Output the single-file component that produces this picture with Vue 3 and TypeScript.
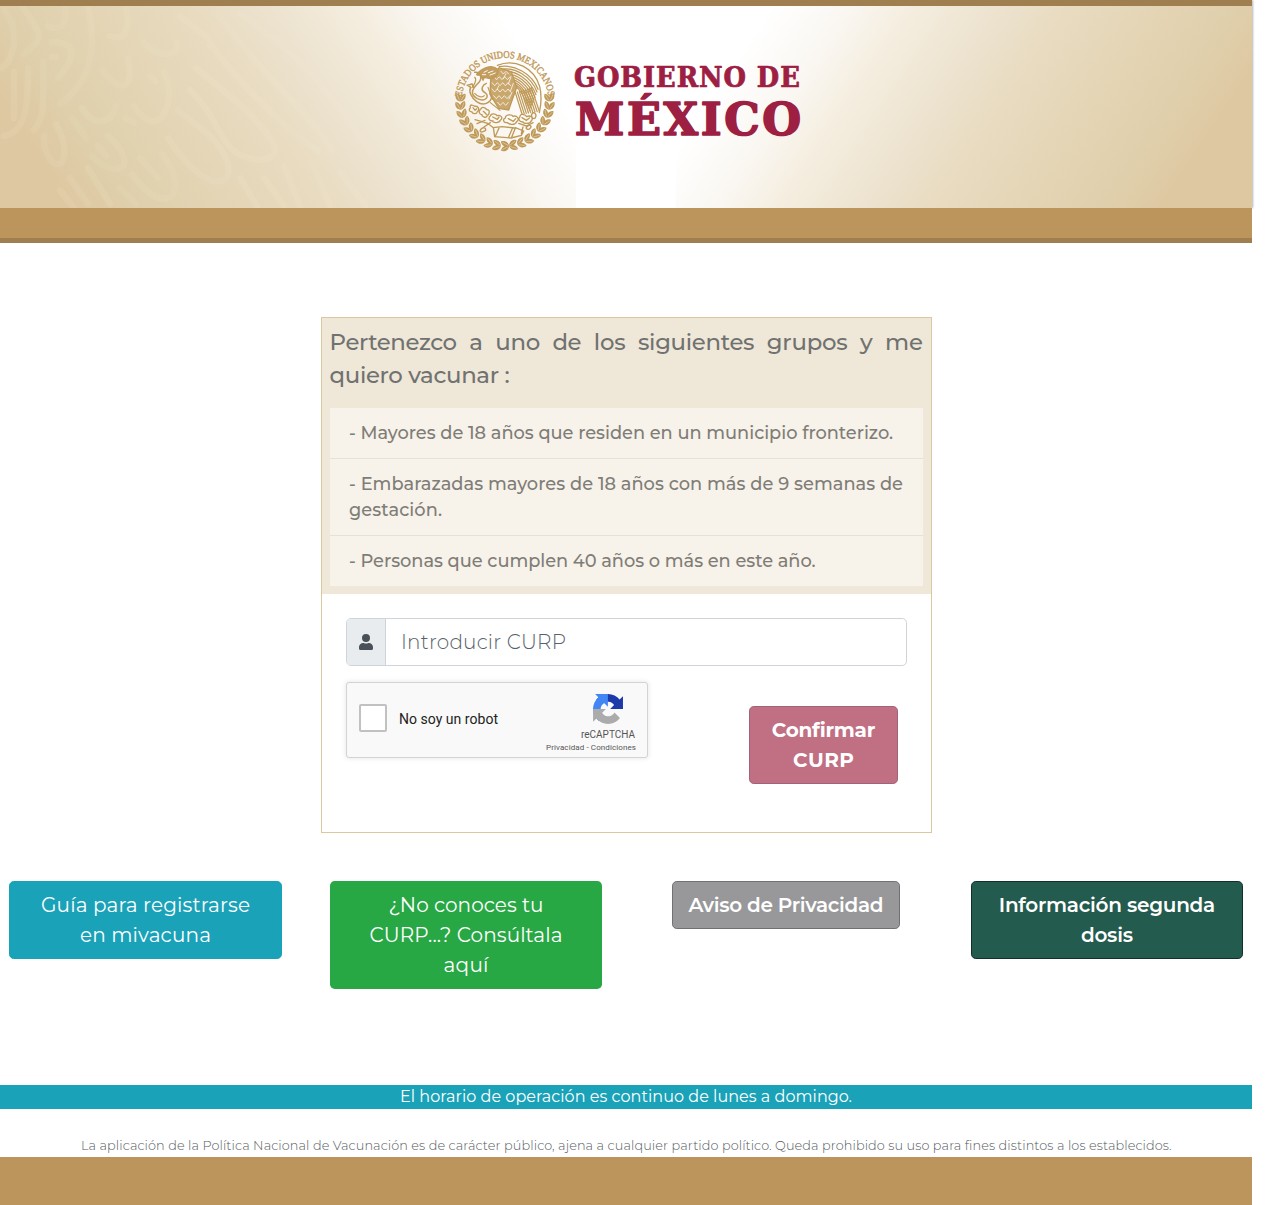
<script setup lang="ts">
import type { Directive } from 'vue'

interface Line { text: string; width: number }
interface LinkButton { kind: string; lines: Line[] }

// Spreads the letters of a line so that it fills the given width.
const vFit: Directive<HTMLElement, number> = {
  mounted(el, { value }) {
    const count = (el.textContent ?? '').length
    if (count < 2) return
    const gap = (value - el.getBoundingClientRect().width) / (count - 1)
    el.style.letterSpacing = `${gap}px`
    el.style.marginRight = `${-gap}px`
  },
}

const titleWords: Line[] = [
  { text: 'Pertenezco', width: 127.5 }, { text: 'a', width: 13 }, { text: 'uno', width: 45 },
  { text: 'de', width: 29 }, { text: 'los', width: 32 }, { text: 'siguientes', width: 116.5 },
  { text: 'grupos', width: 81 }, { text: 'y', width: 12 }, { text: 'me', width: 38 },
]

const groups: Line[][] = [
  [{ text: '- Mayores de 18 años que residen en un municipio fronterizo.', width: 544 }],
  [
    { text: '- Embarazadas mayores de 18 años con más de 9 semanas de', width: 554 },
    { text: 'gestación.', width: 93 },
  ],
  [{ text: '- Personas que cumplen 40 años o más en este año.', width: 466.5 }],
]

const links: LinkButton[] = [
  { kind: 'info', lines: [{ text: 'Guía para registrarse', width: 209 }, { text: 'en mivacuna', width: 131 }] },
  { kind: 'success', lines: [{ text: '¿No conoces tu', width: 155 }, { text: 'CURP...? Consúltala', width: 193 }, { text: 'aquí', width: 45 }] },
  { kind: 'privacy', lines: [{ text: 'Aviso de Privacidad', width: 195 }] },
  { kind: 'second', lines: [{ text: 'Información segunda', width: 216.5 }, { text: 'dosis', width: 52 }] },
]

// Laurel and oak leaves round the lower half of the seal.
const leaves = Array.from({ length: 38 }, (_, i) => {
  const angle = -5 + (i >> 1) * (190 / 18)
  const outer = i % 2 === 0
  const r = outer ? 141 : 127
  const rad = (angle * Math.PI) / 180
  return {
    x: 195 + r * Math.cos(rad),
    y: 184 + r * Math.sin(rad),
    turn: angle + (angle < 90 ? -90 : 90) + (outer ? 28 : -28) * (angle < 90 ? 1 : -1),
  }
})

const feathers = Array.from({ length: 9 }, (_, i) => i)
</script>

<template>
  <div class="page">
    <header class="banner">
      <div class="shade shade-left"></div>
      <div class="shade shade-right"></div>
      <svg class="waves" viewBox="0 0 420 202" width="420" height="202" fill="none">
        <g stroke="#f4efcf" stroke-opacity=".12" stroke-width="6.500" stroke-linecap="round">
          <path d="M5 5C22 30 12 54 2 62M22 0C46 34 42 32 24 48M52 36C80 36 74 54 58 72M52 51h4M65 0C70 24 54 24 48 20M88 0C98 50 88 78 60 98M14 66V112M28 62C28 100 26 126 4 130M43 56C43 94 46 110 34 124M44 130C42 150 60 170 64 150C66 136 60 126 56 118" />
          <path d="M82 102C90 118 110 122 116 100M72 112L86 132M98 140L106 150M108 130C142 160 116 176 92 150M102 64C122 90 134 82 128 52M126 0C130 24 126 36 110 30M144 36C156 52 182 52 176 36M150 70l6 6M134 100C160 140 178 92 164 66M126 112l8 5M140 152l18 20M132 168C166 216 192 186 162 148M120 182l16 16M70 172l18 26M88 162l22 36M60 184l14 18" />
        </g>
        <g stroke="#f6efd8" stroke-opacity=".13" stroke-width="6.500" stroke-linecap="round">
          <path d="M168 132C216 206 252 172 210 130L178 104M190 84C226 118 216 150 260 154C292 150 266 126 242 100L196 62M210 38C250 90 294 130 318 145M218 8C262 70 300 96 332 144M240 8C300 48 330 86 370 146M180 10l28 22M284 160l16 40M312 156l18 44M240 172l18 30M264 172l20 28M340 166l26 34" />
        </g>
      </svg>
      <div class="patch"></div>
      <svg class="seal" viewBox="0 0 390 360" width="130" height="120" fill="none" stroke="#bf9957" stroke-linecap="round">
        <path id="seal-arc" d="M64.500 177A130.700 130.700 0 0 1 325.500 177" stroke="none" />
        <text class="seal-text"><textPath href="#seal-arc" startOffset="6" textLength="382" lengthAdjust="spacingAndGlyphs">ESTADOS UNIDOS MEXICANOS</textPath></text>
        <g v-for="(leaf, i) in leaves" :key="i" :transform="`translate(${leaf.x} ${leaf.y}) rotate(${leaf.turn})`">
          <path d="M-14 0C-7-10 7-10 14 0C7 9-7 9-14 0Z" fill="#bf9957" stroke="none" />
          <path d="M-9 0H8" stroke="#f9f5ed" stroke-width="1.200" />
        </g>
        <!-- raised wing -->
        <path d="M172 76C225 54 282 84 299 139C306 168 303 196 298 218" stroke-width="4" />
        <g stroke-width="3.800">
          <path v-for="n in feathers" :key="n" :d="`M${178 + n * 6} ${80 + n * 7.5}C${222 + n * 2} ${72 + n * 9} ${276 - n * 3} ${100 + n * 8.500} ${294 - n * 3} ${148 + n * 8}`" />
          <path v-for="n in feathers" :key="'p' + n" :d="`M${226 + n * 6} ${158 - n * 2}L${246 + n * 6.5} ${222 - n}`" />
        </g>
        <!-- breast plumage -->
        <path d="M152 119L177 83L214 95L230 142L206 210L176 205L150 163Z" fill="#c9a76d" stroke-width="4" />
        <g stroke="#faf7f0" stroke-width="2.500">
          <path d="M162 110l8 9 8-9 8 9 8-9 8 9 8-9M156 128l8 9 8-9 8 9 8-9 8 9 8-9 8 9M156 147l8 9 8-9 8 9 8-9 8 9 8-9 8 9M161 167l8 9 8-9 8 9 8-9 8 9 8-9M173 187l8 9 8-9 8 9 8-9M183 94l7 8 8-8 8 8M213 110l-8 22M220 130l-9 24M216 157l-9 20M198 101l-8 15M176 138l-5 11" />
        </g>
        <!-- head and serpent -->
        <path d="M110 103C126 83 155 72 172 87C180 96 165 117 150 116L133 112L129 120L120 105C115 105 112 107 110 103Z" fill="#c39e60" stroke-width="4" />
        <path d="M132 97l10-5M145 98l14-5M150 105l16-6M127 104h10" stroke="#faf7f0" stroke-width="3" />
        <path d="M104 97C120 94 128 112 117 127C92 151 91 164 112 176C136 188 151 169 135 158C119 149 128 134 139 130M92 142C86 154 92 171 110 185C135 203 164 181 151 160M91 141L83 136L96 132L102 144" stroke-width="4.500" />
        <path d="M104 112C111 117 105 132 96 143M104 160C112 170 127 174 133 167M144 142L157 178M151 188L180 211" stroke-width="3.500" />
        <!-- cactus, rock and water -->
        <g stroke-width="4">
          <path d="M91 204C88 190 101 196 104 199C115 197 120 208 112 215C109 226 96 219 96 216C85 215 87 207 91 204ZM122 208C126 196 139 206 140 209C152 208 148 224 142 226C139 238 125 228 126 225C115 222 116 211 122 208ZM151 228C153 218 169 221 171 227C184 224 190 234 181 241C177 252 156 247 158 243C145 243 145 232 151 228ZM196 234C196 222 216 223 219 229C232 225 240 239 230 245C225 258 202 252 203 248C188 249 188 237 196 234ZM240 230C240 218 257 224 260 230C273 224 281 235 274 242C270 254 249 250 249 246C236 246 234 235 240 230ZM275 223C282 211 290 224 287 231C284 240 273 235 275 223Z" />
          <path d="M99 203l6 8 5-5M130 214l9 9M158 231l14 7 5-7M205 236l15 8 7-8M246 233l13 8 9-7M105 239L143 250L160 263M111 251L135 241M132 261L151 248M130 263C117 269 118 279 129 275C141 272 139 264 130 263ZM160 263L164 290L214 294L226 264L186 260ZM177 264L166 289M218 263L206 291M226 263L251 273L244 286L213 294M236 250L259 258L279 248M249 261L244 281M261 260C270 252 278 259 269 266C263 271 254 265 261 260Z" />
        </g>
      </svg>
      <svg class="wordmark" viewBox="0 0 240 90" width="240" height="90" fill="#9d2042" stroke="#9d2042" stroke-linejoin="round">
        <text transform="translate(4 31) scale(1.060 1)" font-size="27" textLength="213" lengthAdjust="spacing" stroke-width=".7">GOBIERNO DE</text>
        <text transform="translate(5 79) scale(1.100 1)" font-size="45" textLength="205.500" lengthAdjust="spacing" stroke-width="1.500">MÉXICO</text>
      </svg>
    </header>
    <div class="strip"></div>

    <main>
      <section class="card">
        <div class="card-head">
          <h1>
            <span class="title-row">
              <span v-for="w in titleWords" :key="w.text" v-fit="w.width" class="line">{{ w.text }}</span>
            </span>
            <span class="title-row"><span v-fit="180" class="line">quiero vacunar :</span></span>
          </h1>
          <ul>
            <li v-for="(g, i) in groups" :key="i">
              <div v-for="l in g" :key="l.text"><span v-fit="l.width" class="line">{{ l.text }}</span></div>
            </li>
          </ul>
        </div>
        <div class="card-body">
          <div class="input-group">
            <div class="addon">
              <svg viewBox="0 0 448 512" width="14" height="16" fill="#495057"><path d="M224 256a128 128 0 1 0 0-256 128 128 0 0 0 0 256zm89.600 32h-16.700a174 174 0 0 1-145.800 0h-16.700A134.400 134.400 0 0 0 0 422.400V464a48 48 0 0 0 48 48h352a48 48 0 0 0 48-48v-41.600A134.400 134.400 0 0 0 313.600 288z" /></svg>
            </div>
            <div class="field"><span v-fit="165" class="line">Introducir CURP</span></div>
          </div>
          <div class="actions">
            <div class="captcha">
              <span class="box"></span>
              <span class="robot"><span v-fit="99" class="line">No soy un robot</span></span>
              <div class="brand">
                <svg viewBox="0 0 64 64" width="30" height="30">
                  <path fill="#1c3aa9" d="M64 31.955a33.650 33.650 0 0 0-.048-1.381V4.688l-7.156 7.156C50.939 4.675 42.033.094 32.060.094c-10.378 0-19.600 4.960-25.437 12.643l11.730 11.854a15.550 15.550 0 0 1 4.754-5.335c2.051-1.600 4.957-2.909 8.953-2.909.483 0 .855.056 1.129.162 4.951.391 9.243 3.123 11.770 7.089l-8.303 8.303 27.339-.098z" />
                  <path fill="#4285f4" d="M31.862.094a33.300 33.300 0 0 0-1.381.048H4.594l7.156 7.156C4.581 13.155 0 22.061 0 32.034c0 10.378 4.960 19.600 12.643 25.437l11.854-11.730a15.550 15.550 0 0 1-5.335-4.754c-1.600-2.051-2.909-4.957-2.909-8.953 0-.483.056-.855.162-1.129.391-4.951 3.123-9.243 7.089-11.770l8.303 8.303z" />
                  <path fill="#ababab" d="M.127 32.026c.002.465.018.926.048 1.381v25.886l7.156-7.156c5.857 7.169 14.763 11.750 24.736 11.750 10.378 0 19.600-4.960 25.437-12.643L45.773 39.390a15.550 15.550 0 0 1-4.754 5.335c-2.051 1.600-4.957 2.909-8.953 2.909-.483 0-.855-.056-1.129-.162-4.951-.391-9.243-3.123-11.770-7.089l8.303-8.303z" />
                </svg>
                <span class="brand-name"><span v-fit="54" class="line">reCAPTCHA</span></span>
                <span class="brand-links"><span v-fit="90" class="line">Privacidad - Condiciones</span></span>
              </div>
            </div>
            <button class="btn confirm" type="button">
              <span v-fit="103.500" class="line">Confirmar</span>
              <span v-fit="61" class="line">CURP</span>
            </button>
          </div>
        </div>
      </section>

      <nav class="links">
        <a v-for="b in links" :key="b.kind" class="btn" :class="b.kind">
          <span v-for="l in b.lines" :key="l.text" v-fit="l.width" class="line">{{ l.text }}</span>
        </a>
      </nav>
    </main>

    <div class="schedule"><span v-fit="452" class="line">El horario de operación es continuo de lunes a domingo.</span></div>
    <p class="legal"><span v-fit="1090.500" class="line">La aplicación de la Política Nacional de Vacunación es de carácter público, ajena a cualquier partido político. Queda prohibido su uso para fines distintos a los establecidos.</span></p>
    <footer></footer>
  </div>
</template>

<style>
body { margin: 0; background: #fff; }
</style>

<style scoped>
* { box-sizing: border-box; }
.page { width: 1252px; height: 1205px; display: flex; flex-direction: column; font-family: Montserrat, Inter, "Open Sans", sans-serif; }
.line { display: inline-block; white-space: nowrap; }
.banner {
  position: relative; height: 208px; border-top: 6px solid #9f7f4f; flex: none;
  display: flex; padding: 34px 0 0 440px; box-shadow: 1px 0 2px rgba(0, 0, 0, .3);
}
.shade { position: absolute; top: 0; bottom: 0; }
.shade-left { left: 0; width: 634px; background: linear-gradient(236.6deg, #fff 115px, #faf7f2 180px, #f5eee0 230px, #ede3d0 300px, #e8dbc0 370px, #dfcfab 530px, #dec8a2 580px); }
.shade-right { left: 634px; width: 618px; background: linear-gradient(123.4deg, #fff 115px, #faf7f2 180px, #f5eee0 230px, #ede3d0 300px, #e8dbc0 365px, #dfcda8 525px, #dec8a2 550px); }
.waves { position: absolute; left: 0; top: 0; }
.patch { position: absolute; left: 576px; bottom: 0; width: 100px; height: 72px; background: #fff; }
.seal { position: relative; flex: none; }
.seal-text { font: 400 30px "Liberation Serif", serif; fill: #bf9957; stroke: #bf9957; stroke-width: 1.2px; }
.wordmark { position: relative; margin: 16px 0 0 0; font-family: "DejaVu Serif Condensed", "DejaVu Serif", serif; font-stretch: semi-condensed; font-weight: 700; }
.strip { height: 35px; flex: none; background: #bc955c; border-bottom: 5px solid #9f7f4f; position: relative; }
main { padding-top: 74px; height: 842px; flex: none; }
.card { width: 611px; height: 516px; margin-left: 321px; border: 1px solid #dcc8a0; }
.card-head { background: #efe7d7; height: 276px; padding: 8px; }
h1 { margin: 0 0 16px; font-size: 22.800px; font-weight: 500; line-height: 33px; color: #6f7271; }
.title-row { display: flex; justify-content: space-between; height: 33px; margin-left: -.4px; }
ul { list-style: none; margin: 0; padding: 0; background: #f7f2ea; }
li { padding: 12px 19px; font-size: 17.800px; font-weight: 500; line-height: 26px; color: #7f7d77; border-bottom: 1px solid #e6e1d8; }
li div { height: 26px; }
li:last-child { border-bottom: 0; }
.card-body { padding: 24px 24px 0; }
.input-group { display: flex; height: 48px; border: 1px solid #ced4da; border-radius: 4.800px; overflow: hidden; }
.addon { width: 39px; background: #e9ecef; border-right: 1px solid #ced4da; display: flex; align-items: center; justify-content: center; }
.field { padding-left: 15px; line-height: 46px; font-size: 20px; font-weight: 350; color: #58616a; }
.actions { display: flex; justify-content: space-between; align-items: flex-start; padding: 16px 9px 0 0; }
.captcha { width: 302px; height: 76px; background: #f9f9f9; border: 1px solid #d3d3d3; border-radius: 3px; box-shadow: 0 0 4px 1px rgba(0, 0, 0, .08); display: flex; align-items: center; padding-left: 12px; font-family: Roboto, sans-serif; color: #222; }
.box { width: 28px; height: 28px; margin-top: -4px; border: 2px solid #c1c1c1; border-radius: 2px; background: #fff; flex: none; }
.robot { font-size: 14px; margin: -2px 0 0 12px; width: 147px; flex: none; }
.brand { width: 90px; display: flex; flex-direction: column; align-items: flex-end; align-self: stretch; padding-top: 11px; color: #555; flex: none; }
.brand svg { margin-right: 13px; }
.brand-name { font-size: 10px; line-height: 12px; margin: 5px 1px 0 0; }
.brand-links { font-size: 8px; line-height: 10px; margin-top: 2px; }
.btn { display: flex; flex-direction: column; align-items: center; font-family: inherit; font-size: 20px; line-height: 30px; color: #fff; padding: 8px 0; border: 1px solid transparent; border-radius: 4.800px; }
.btn .line { height: 30px; }
.confirm { width: 149px; height: 78px; margin-top: 24px; background: #c16f83; border-color: #a1637a; font-weight: 700; }
.links { display: flex; align-items: flex-start; padding: 48px 9px 0; }
.info { width: 273px; background: #1aa2b8; border-color: #17a2b8; }
.success { width: 272px; margin-left: 48px; background: #28a745; }
.privacy { width: 228px; margin-left: 70px; background: #98989a; border-color: #6f7271; font-weight: 600; }
.second { width: 272px; margin-left: 71px; background: #235b4e; border-color: #10312b; font-weight: 600; }
.schedule { height: 24px; flex: none; background: #1aa2b8; color: #fff; font-size: 16px; line-height: 23px; text-align: center; }
.legal { margin: 0; height: 48px; flex: none; padding: 27px 0 0 81px; font-size: 12.800px; line-height: 20px; font-weight: 350; color: #545b60; }
footer { height: 48px; flex: none; background: #bc955c; }
</style>
